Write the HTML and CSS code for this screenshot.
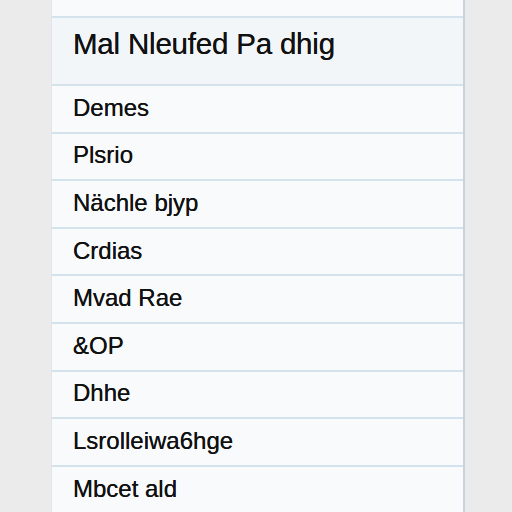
FILE: index.html
```html
<!DOCTYPE html>
<html lang="en">
<head>
<meta charset="utf-8">
<title>List</title>
<link rel="stylesheet" href="styles.css">
</head>
<body>
<div class="panel">
  <div class="row stub"></div>
  <div class="row header"><span>Mal Nleufed Pa dhig</span></div>
  <div class="row item"><span>Demes</span></div>
  <div class="row item"><span>Plsrio</span></div>
  <div class="row item"><span>Nächle bjyp</span></div>
  <div class="row item"><span>Crdias</span></div>
  <div class="row item"><span>Mvad Rae</span></div>
  <div class="row item"><span>&amp;OP</span></div>
  <div class="row item"><span>Dhhe</span></div>
  <div class="row item"><span>Lsrolleiwa6hge</span></div>
  <div class="row item"><span>Mbcet ald</span></div>
</div>
</body>
</html>
```
FILE: styles.css
```css
html, body {
  margin: 0;
  padding: 0;
  background: #ebebeb;
  height: 512px;
  overflow: hidden;
}
body {
  font-family: "Liberation Sans", Arial, sans-serif;
  color: #111111;
}
.panel {
  margin-left: 51px;
  width: 411px;
  background: #f8fafc;
  border-left: 1px solid #e2e6ea;
  border-right: 2px solid #c9d3dc;
  display: flex;
  flex-direction: column;
}
.row {
  display: flex;
  border-bottom: 2px solid #d4e2ec;
  padding-left: 21px;
  box-sizing: content-box;
  flex: none;
}
.stub {
  height: 16px;
  background: #f8fafb;
}
.header {
  height: 66px;
  align-items: flex-start;
  background: #f2f6f9;
  font-size: 29.5px;
  line-height: 1;
}
.header span {
  padding-top: 11px;
  letter-spacing: -0.2px;
  text-shadow: 0 0 0.4px #111111;
}
.item {
  height: 45.6px;
  align-items: center;
  font-size: 24px;
  line-height: 1;
}
.item span {
  position: relative;
  top: -1px;
  text-shadow: 0 0 0.4px #111111;
}
```
